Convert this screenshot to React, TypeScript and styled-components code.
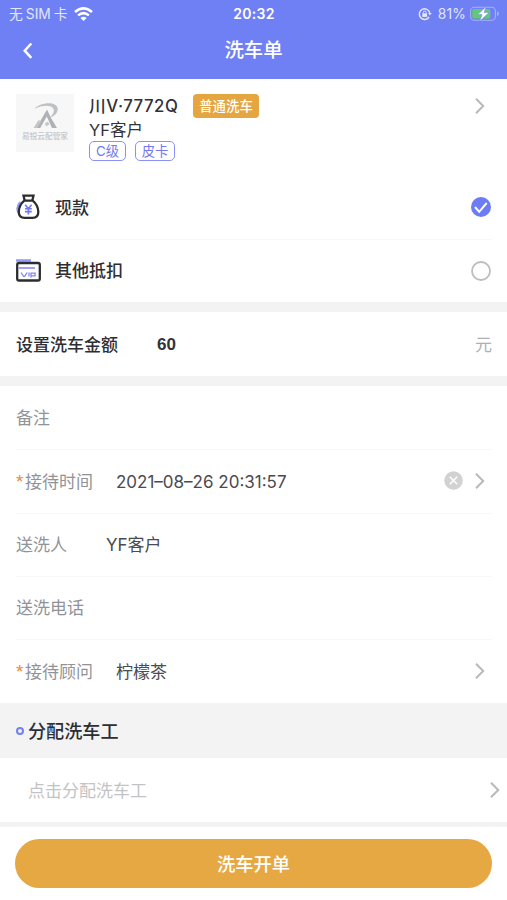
import React from 'react';
import styled, { createGlobalStyle } from 'styled-components';

const Global = createGlobalStyle`
  * { box-sizing: border-box; }
  body {
    margin: 0;
    background: #fff;
    color: #323338;
    font-family: Inter, "Noto Sans CJK SC", sans-serif;
    font-size: 17px;
  }
`;

const Page = styled.main`
  width: 507px;
  height: 900px;
  overflow: hidden;
  display: flex;
  flex-direction: column;
  background: #fff;
`;

const Header = styled.header`
  height: 79px;
  flex: none;
  background: #6f80f5;
  color: #fff;
`;

const StatusBar = styled.div`
  height: 28px;
  padding: 0 8px 0 9px;
  display: grid;
  grid-template-columns: 1fr auto 1fr;
  align-items: center;
  font-size: 14px;
  line-height: 28px;
`;

const StatusGroup = styled.div<{ $end?: boolean }>`
  display: flex;
  align-items: center;
  justify-content: ${(p) => (p.$end ? 'flex-end' : 'flex-start')};
  color: #e3e6ff;
`;

const Carrier = styled.span`
  width: 60px;
  margin-right: 5px;
  font-size: 13.8px;
  white-space: nowrap;
  display: flex;
  gap: 3px;
  line-height: 27px;
`;

const Clock = styled.span`
  font-weight: 600;
  font-size: 14px;
  letter-spacing: 0.3px;
`;

const Percent = styled.span`
  margin: 0 4px 0 6px;
  font-size: 13.8px;
  letter-spacing: 0.2px;
`;

const NavBar = styled.div`
  height: 44px;
  padding: 0 16px 0 20px;
  display: grid;
  grid-template-columns: 1fr auto 1fr;
  align-items: center;
`;

const Title = styled.h1`
  margin: 0 4px 0 0;
  font-size: 19.4px;
  line-height: 28px;
  font-weight: 500;
`;

const BackButton = styled.button`
  width: 16px;
  height: 20px;
  padding: 0;
  border: 0;
  background: none;
  color: inherit;
  display: flex;
  margin-top: 2px;
`;

const Customer = styled.section`
  height: 97px;
  flex: none;
  padding: 15px 22px 0 16px;
  display: flex;
`;

const Avatar = styled.div`
  width: 58px;
  height: 58px;
  margin-right: 15px;
  background: #f7f7f7;
  display: flex;
  flex-direction: column;
  align-items: center;
  padding-top: 9px;
`;

const AvatarText = styled.span`
  margin-top: 2px;
  font-size: 7.7px;
  line-height: 10px;
  font-weight: 500;
  color: #c4c6c9;
  white-space: nowrap;
`;

const Details = styled.div`
  flex: 1;
  display: flex;
  flex-direction: column;
`;

const Line = styled.div`
  height: 24px;
  display: flex;
  align-items: center;
`;

const Plate = styled.span`
  width: 104px;
  font-weight: 500;
  font-size: 16.8px;
  line-height: 22px;
  letter-spacing: 0.5px;
  color: #303238;
  white-space: nowrap;
`;

const Name = styled.div`
  height: 23px;
  line-height: 25px;
  font-size: 16.5px;
`;

const ServiceBadge = styled.span`
  width: 66px;
  height: 24px;
  border-radius: 4px;
  background: #e5a540;
  color: #fff;
  font-size: 13.4px;
  line-height: 24px;
  font-weight: 500;
  text-align: center;
`;

const Tags = styled.div`
  display: flex;
  gap: 9px;
`;

const Tag = styled.span<{ $width: number }>`
  width: ${(p) => p.$width}px;
  height: 20px;
  border: 1.5px solid #8b91f8;
  border-radius: 5px;
  color: #7479ee;
  font-size: 13.3px;
  line-height: 18px;
  text-align: center;
`;

const Row = styled.div<{ $height?: number; $line?: boolean }>`
  height: ${(p) => p.$height ?? 63}px;
  flex: none;
  margin: 0 15px 0 16px;
  padding-bottom: 1px;
  display: flex;
  align-items: center;
  box-shadow: ${(p) => (p.$line ? '0 1px 0 #f7f7f8' : 'none')};
`;

const IconSlot = styled.span`
  width: 39px;
  display: flex;
`;

const Strong = styled.span`
  padding-top: 2px;
  font-weight: 500;
  line-height: 22px;
  color: #2c2e33;
`;

const Amount = styled.span`
  margin-left: 39px;
  padding-top: 2px;
  font-family: "Liberation Sans", Arial, sans-serif;
  font-weight: 700;
  font-size: 17px;
`;

const Trailing = styled.span<{ $right?: number; $drop?: boolean }>`
  margin-left: auto;
  margin-right: ${(p) => p.$right ?? 0}px;
  padding-top: ${(p) => (p.$drop ? 2 : 0)}px;
  display: flex;
  align-items: center;
  gap: 12px;
  color: #b0b0b2;
`;

const Label = styled.span<{ $width?: number }>`
  width: ${(p) => (p.$width ? p.$width + 'px' : 'auto')};
  padding-top: 2px;
  color: #919399;
  line-height: 22px;
  white-space: nowrap;
  display: flex;
  align-items: center;
`;

const Required = styled.span`
  width: 9px;
  height: 22px;
  color: #ed8a38;
  font-family: "Liberation Sans", Arial, sans-serif;
  font-size: 19px;
  line-height: 22px;
`;

const Value = styled.span`
  padding-top: 2px;
  color: #4a4b50;
  line-height: 22px;
  white-space: nowrap;
`;

const Gap = styled.div<{ $height: number }>`
  height: ${(p) => p.$height}px;
  flex: none;
  background: #f3f3f4;
`;

const SectionHead = styled.h2`
  height: 55px;
  flex: none;
  margin: 0;
  padding: 0 16px;
  display: flex;
  align-items: center;
  gap: 4px;
  background: #f3f3f3;
  color: #2c2e33;
  font-size: 18.1px;
  line-height: 26px;
  font-weight: 500;
`;

const Ring = styled.i`
  width: 8px;
  height: 8px;
  border: 2.5px solid #7180f4;
  border-radius: 50%;
`;

const AssignRow = styled.div`
  height: 64px;
  flex: none;
  padding: 0 7px 1px 28px;
  display: flex;
  align-items: center;
  color: #c3c3c5;
`;

const Footer = styled.footer`
  padding: 12px 15px;
`;

const SubmitButton = styled.button`
  width: 100%;
  height: 49px;
  padding: 0 0 1px;
  border: 0;
  border-radius: 25px;
  background: #e6a842;
  color: #fff;
  font: inherit;
  font-size: 18.3px;
  font-weight: 500;
`;

const Chevron = () => (
  <svg width="10" height="18" viewBox="0 0 10 18" fill="none" stroke="#b9b9bb" strokeWidth="2">
    <path d="M1 1.8 8.2 9 1 16.2" />
  </svg>
);

const BackIcon = () => (
  <svg width="16" height="20" viewBox="0 0 16 20" fill="none" stroke="currentColor" strokeWidth="2.5">
    <path d="M11.3 2.5 4.7 9.7l6.6 7.2" />
  </svg>
);

const WifiIcon = () => (
  <svg width="19" height="15" viewBox="0 0 19 15" fill="none" stroke="#fff" strokeWidth="2.5">
    <path d="M1 5q8.500-7.200 17 0M4.100 8.400q5.400-4.600 10.800 0" />
    <path d="m6.400 10.900 3.100 3.200 3.100-3.200q-3.100-2.200-6.200 0Z" fill="#fff" stroke="none" />
  </svg>
);

const LockIcon = () => (
  <svg width="14" height="14" viewBox="0 0 14 14" fill="none" stroke="#e3e6ff" strokeWidth="1.4">
    <path d="M11.1 10A5.3 5.3 0 1 1 11.8 6" />
    <path d="m10.2 6.1 1.7 2.5 1.8-2.5Z" fill="#e3e6ff" stroke="none" />
    <path d="M4.3 6.3h4.8v3.6H4.3Z" fill="#e3e6ff" stroke="none" />
    <path d="M5.3 6.4V5.3q0-1.3 1.4-1.3t1.4 1.3v1.1" strokeWidth="1" />
  </svg>
);

const BatteryIcon = () => (
  <svg width="29" height="16" viewBox="0 0 29 16">
    <rect x=".6" y="1.2" width="24.8" height="13" rx="3.8" fill="none" stroke="#a9b0f3" strokeWidth="1.1" />
    <path d="M27 5.5q2 .4 2 2.2t-2 2.2Z" fill="#a9b0f3" />
    <rect x="2.3" y="3" width="18" height="9.5" rx="2" fill="#60cb70" />
    <path d="M16.300.5 7.700 8.600h4.400L9.700 15.300l9.300-8.800h-5Z" fill="#fff" stroke="#6f80f5" strokeWidth=".5" />
  </svg>
);

const BrandIcon = () => (
  <svg width="27" height="27" viewBox="0 0 27 27">
    <path d="M2.500 5.800C8-.8 25.500-2.400 25.800 6.200c.1 4.500-5 7.700-9.300 9.100 4.200-3.300 6.300-6.300 5-9.300C19.500 1.200 10 2.200 2.500 5.800Z" fill="#bec1c4" />
    <path d="m15 6.500 4 8.500 6 10h-5L14.800 13.500 8.200 25H4.200L15 6.500Z" fill="#aeb2b6" />
    <path d="m6.500 17 2.500 1.200L5 25H1.500Zm6.500 3 3-1.300 1.400 2.600-3.400 2.200Z" fill="#c4c7ca" />
  </svg>
);

const MoneyIcon = () => (
  <svg width="24" height="26" viewBox="0 0 24 26" fill="none">
    <path d="M4.400 8C.7 11.500.3 17 3.300 20" stroke="#9397f5" strokeWidth="2" />
    <path d="M8.300 6.700h8.400c3.600 3 5.600 7.200 5.600 11.200 0 4-2 5.900-5.800 5.900H8.600c-3.800 0-5.800-1.900-5.800-5.900C2.800 13.900 4.700 9.700 8.300 6.700Z" stroke="#2b2d31" strokeWidth="2.300" />
    <path d="M8.700 6.500 7.500 1.700h10L16.300 6.500" stroke="#2b2d31" strokeWidth="2.300" />
    <path d="m9.200 10.700 3.200 4 3.200-4M12.400 14.500v6M9 14.700h6.800M9 17.600h6.800" stroke="#7278f1" strokeWidth="1.600" />
  </svg>
);

const VipIcon = () => (
  <svg width="25" height="23" viewBox="0 0 25 23" fill="none">
    <path d="M0 1.500h15" stroke="#9397f5" strokeWidth="2.500" />
    <rect x="1.200" y="4" width="22.600" height="17.500" rx="1.800" stroke="#2b2d31" strokeWidth="2.300" />
    <path d="M2.500 9h16.500" stroke="#9699f4" strokeWidth="1.800" />
    <path d="m5 13.500 2.600 3.800h1l2.600-3.800M13 13.500v4M15 18.500v-4.300h4.100v2.600H15" stroke="#8187f1" strokeWidth="1.300" />
  </svg>
);

const CheckedIcon = () => (
  <svg width="20" height="20" viewBox="0 0 20 20" fill="none">
    <circle cx="10" cy="10" r="10" fill="#6c7cf2" />
    <path d="m4 10 4.200 4.800L15.700 6" stroke="#fff" strokeWidth="2" />
  </svg>
);

const EmptyIcon = () => (
  <svg width="20" height="20" viewBox="0 0 20 20" fill="none">
    <circle cx="10" cy="10" r="9" stroke="#bdbdbf" strokeWidth="1.800" />
  </svg>
);

const ClearIcon = () => (
  <svg width="19" height="19" viewBox="0 0 19 19" fill="none">
    <circle cx="9.500" cy="9.500" r="9.300" fill="#d2d2d2" />
    <path d="m5.800 5.800 7.400 7.400m0-7.400-7.400 7.400" stroke="#fff" strokeWidth="1.500" />
  </svg>
);

export default function App() {
  return (
    <>
      <Global />
      <Page>
        <Header>
          <StatusBar>
            <StatusGroup>
              <Carrier><span>无</span><span>SIM</span><span>卡</span></Carrier>
              <WifiIcon />
            </StatusGroup>
            <Clock>20:32</Clock>
            <StatusGroup $end><LockIcon /><Percent>81%</Percent><BatteryIcon /></StatusGroup>
          </StatusBar>
          <NavBar>
            <BackButton aria-label="返回"><BackIcon /></BackButton>
            <Title>洗车单</Title>
          </NavBar>
        </Header>
        <Customer>
          <Avatar><BrandIcon /><AvatarText>易锐云配管家</AvatarText></Avatar>
          <Details>
            <Line><Plate>川V·7772Q</Plate><ServiceBadge>普通洗车</ServiceBadge><Trailing><Chevron /></Trailing></Line>
            <Name>YF客户</Name>
            <Tags><Tag $width={37}>C级</Tag><Tag $width={40}>皮卡</Tag></Tags>
          </Details>
        </Customer>
        <Row $line><IconSlot><MoneyIcon /></IconSlot><Strong>现款</Strong><Trailing $right={1}><CheckedIcon /></Trailing></Row>
        <Row><IconSlot><VipIcon /></IconSlot><Strong>其他抵扣</Strong><Trailing $right={1} $drop><EmptyIcon /></Trailing></Row>
        <Gap $height={10} />
        <Row $height={64}><Strong>设置洗车金额</Strong><Amount>60</Amount><Trailing>元</Trailing></Row>
        <Gap $height={10} />
        <Row $line><Label>备注</Label></Row>
        <Row $height={64} $line>
          <Label $width={100}><Required>*</Required>接待时间</Label>
          <Value>2021–08–26 20:31:57</Value>
          <Trailing $right={7}><ClearIcon /><Chevron /></Trailing>
        </Row>
        <Row $line><Label $width={90}>送洗人</Label><Value>YF客户</Value></Row>
        <Row $line><Label>送洗电话</Label></Row>
        <Row $height={64}>
          <Label $width={100}><Required>*</Required>接待顾问</Label>
          <Value>柠檬茶</Value>
          <Trailing $right={7}><Chevron /></Trailing>
        </Row>
        <SectionHead><Ring />分配洗车工</SectionHead>
        <AssignRow>点击分配洗车工<Trailing><Chevron /></Trailing></AssignRow>
        <Gap $height={5} />
        <Footer><SubmitButton>洗车开单</SubmitButton></Footer>
      </Page>
    </>
  );
}
